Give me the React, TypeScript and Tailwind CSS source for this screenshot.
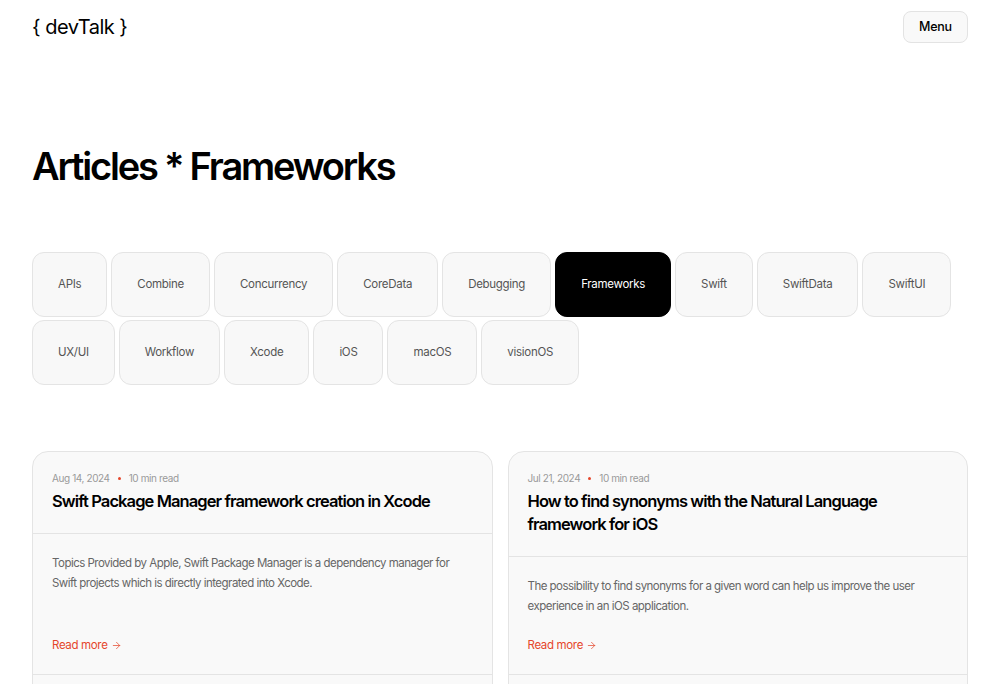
import { ArrowRight } from 'lucide-react';

const tags = [
	'APIs',
	'Combine',
	'Concurrency',
	'CoreData',
	'Debugging',
	'Frameworks',
	'Swift',
	'SwiftData',
	'SwiftUI',
	'UX/UI',
	'Workflow',
	'Xcode',
	'iOS',
	'macOS',
	'visionOS',
];

const articles = [
	{
		date: 'Aug 14, 2024',
		read: '10 min read',
		title: 'Swift Package Manager framework creation in Xcode',
		excerpt:
			'Topics Provided by Apple, Swift Package Manager is a dependency manager for Swift projects which is directly integrated into Xcode.',
	},
	{
		date: 'Jul 21, 2024',
		read: '10 min read',
		title: 'How to find synonyms with the Natural Language framework for iOS',
		excerpt:
			'The possibility to find synonyms for a given word can help us improve the user experience in an iOS application.',
	},
];

export default function App() {
	const active = 'Frameworks';
	return (
		<div className="min-h-screen bg-white text-black font-['Inter',sans-serif] px-8">
			<header className="flex items-center justify-between pt-[11px]">
				<a className="text-[20px] leading-none tracking-tight">{'{ devTalk }'}</a>
				<button className="h-8 w-[65px] text-[12.5px] font-medium tracking-[-0.02em] rounded-lg border border-[#e3e3e3] bg-[#f9f9f9]">
					Menu
				</button>
			</header>

			<h1 className="mt-[104px] text-[38px] leading-none font-semibold tracking-[-0.058em]">
				Articles * Frameworks
			</h1>

			<div className="mt-[67px] flex flex-wrap gap-x-1 gap-y-[3px]">
				{tags.map((t) => (
					<button
						key={t}
						className={
							t === active
								? 'h-[65px] px-[25px] rounded-xl text-[11.5px] tracking-[-0.025em] bg-black text-white border border-black'
								: 'h-[65px] px-[25px] rounded-xl text-[11.5px] tracking-[-0.025em] bg-[#f8f8f8] text-[#555] border border-[#e4e4e4]'
						}>
						{t}
					</button>
				))}
			</div>

			<div className="mt-[66px] grid grid-cols-2 gap-[15px]">
				{articles.map((a) => (
					<article
						key={a.title}
						className="flex flex-col rounded-t-2xl border border-[#e4e4e4] bg-[#f9f9f9]">
						<div className="px-[19px] pt-[19px] pb-[20px] border-b border-[#e4e4e4]">
							<p className="flex items-center gap-[8px] text-[10px] leading-[14px] tracking-[-0.04em] text-[#999]">
								<span>{a.date}</span>
								<span className="w-[3px] h-[3px] rounded-full bg-[#e5462b]" />
								<span>{a.read}</span>
							</p>
							<h2 className="mt-[5px] text-[16.5px] leading-[23px] font-semibold tracking-[-0.055em]">
								{a.title}
							</h2>
						</div>
						<div className="flex flex-col flex-1 px-[19px] pt-[19px] pb-[20px] border-b border-[#e4e4e4]">
							<p className="mb-5 text-[11.5px] leading-5 tracking-[-0.045em] text-[#666]">{a.excerpt}</p>
							<a className="mt-auto flex items-center gap-[3px] text-[11.5px] leading-[18px] tracking-[-0.03em] text-[#e5462b]">
								Read more <ArrowRight size={11} strokeWidth={1.6} />
							</a>
						</div>
						<div className="h-10" />
					</article>
				))}
			</div>
		</div>
	);
}
